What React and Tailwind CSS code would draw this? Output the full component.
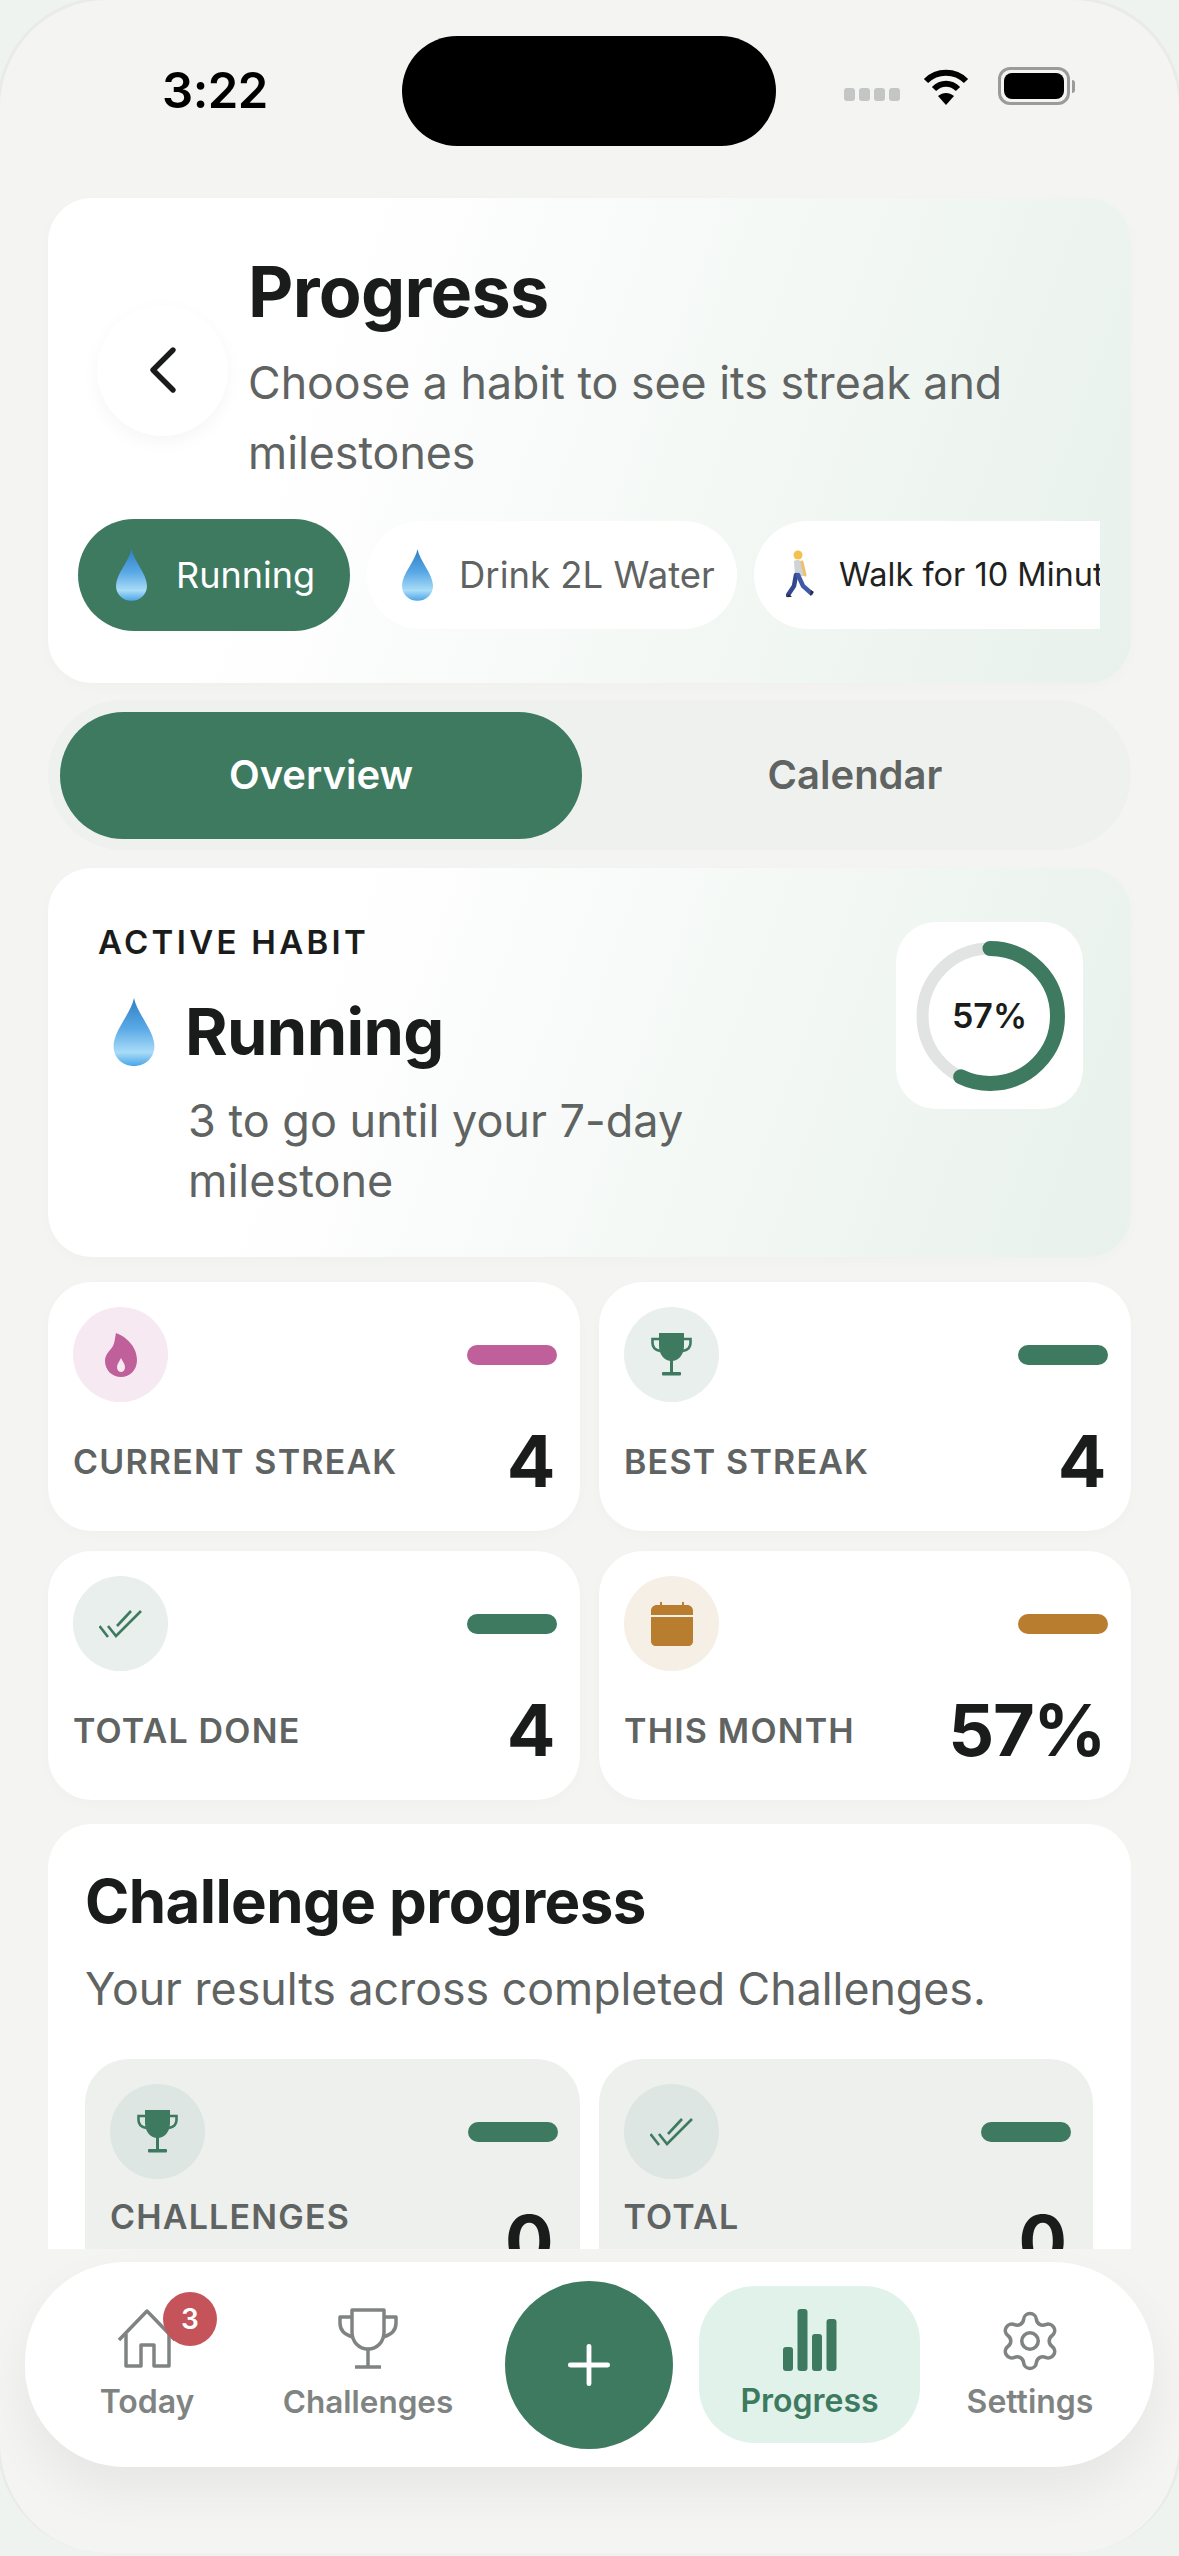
import { useId } from "react";
import { ChevronLeft, Plus, Settings } from "lucide-react";

function Drop({ className }) {
	const id = useId();
	return (
		<svg viewBox="0 0 30 50" className={`shrink-0 ${className}`}>
			<defs>
				<linearGradient id={id} x1="0" y1="0" x2="0" y2="1">
					<stop offset="0" stopColor="#2f7fc4" />
					<stop offset="0.45" stopColor="#5aa9e6" />
					<stop offset="0.8" stopColor="#a9dcf7" />
					<stop offset="1" stopColor="#4aa5e8" />
				</linearGradient>
			</defs>
			<path d="M15 0C17 11 30 24 30 35.5C30 44 23.5 50 15 50C6.5 50 0 44 0 35.5C0 24 13 11 15 0Z" fill={`url(#${id})`} />
		</svg>
	);
}

function Walker({ className }) {
	return (
		<svg viewBox="0 0 30 50" className={`shrink-0 ${className}`}>
			<circle cx="12" cy="5" r="4.5" fill="#f2c14e" />
			<path d="M8 11C11 9 16 10 17 14L18 26H9Z" fill="#cfd3d6" />
			<path d="M16 12L19 25" stroke="#f0bf6a" strokeWidth="3" strokeLinecap="round" />
			<path d="M10 25L8 36L2 45" stroke="#33488f" strokeWidth="4.5" fill="none" strokeLinecap="round" />
			<path d="M12 25L17 36L25 43" stroke="#3f58a8" strokeWidth="4.5" fill="none" strokeLinecap="round" />
			<path d="M0 47H6L3 44Z M24 46L28 42L25 40Z" fill="#2b2f3a" />
		</svg>
	);
}

function FlameIcon() {
	return (
		<svg viewBox="0 0 32 44" className="w-[32px] h-[44px]">
			<path
				fillRule="evenodd"
				d="M11 0C20 3 32 13 32 27C32 37 25 44 16 44C7 44 0 37 0 28C0 21 5 18 8 13C10 9 10 4 11 0ZM16 25C14 29 12 31 12 34.500C12 37 14 39 16 39C18 39 20 37 20 34.500C20 31 18 29 16 25Z"
				fill="#c0609b"
			/>
		</svg>
	);
}

function TrophyFilled() {
	return (
		<svg viewBox="0 0 42 43" className="w-[42px] h-[43px]">
			<path d="M8 0H33V13C33 22 27 28 20.500 28C14 28 8 22 8 13Z" fill="#3d7a60" />
			<path d="M8 6H1.500V10C1.500 14 4 17 9 18M33 6H39.500V10C39.500 14 37 17 32 18" stroke="#3d7a60" strokeWidth="2.600" fill="none" />
			<rect x="19" y="27" width="3" height="13" fill="#3d7a60" />
			<rect x="11" y="39" width="19" height="3.500" rx="1" fill="#3d7a60" />
		</svg>
	);
}

function DoubleCheck() {
	return (
		<svg viewBox="0 0 43 30" className="w-[43px] h-[30px]" fill="none" stroke="#3d7a60" strokeWidth="2.600">
			<path d="M0.500 17L9 28" />
			<path d="M9 17L17 27L42 2" />
			<path d="M18 17L32 2" />
		</svg>
	);
}

function CalendarFilled() {
	return (
		<svg viewBox="0 0 42 44" className="w-[42px] h-[44px]">
			<path d="M9 0H11V3H31V0H33V3H36C39.500 3 42 5.500 42 9V13H0V9C0 5.500 2.500 3 6 3H9Z" fill="#b87d2e" />
			<path d="M0 15H42V39C42 42 40 44 37 44H5C2 44 0 42 0 39Z" fill="#b87d2e" />
		</svg>
	);
}

function StatCard({ icon, circle, bar, label, value }) {
	return (
		<div className="h-[249px] rounded-[44px] bg-white pl-[25px] pr-[26px] pt-[25px] shadow-[0_4px_14px_rgba(0,0,0,0.02)]">
			<div className="flex items-center justify-between">
				<div className={`w-[95px] h-[95px] rounded-full flex items-center justify-center ${circle}`}>{icon}</div>
				<div className={`-mr-[3px] w-[90px] h-[20px] rounded-full ${bar}`} />
			</div>
			<div className="mt-[21px] flex items-center justify-between">
				<span className="text-[34px] font-semibold tracking-[0.035em] text-[#5f6362]">{label}</span>
				<span className="text-[72px] leading-[76px] font-bold tracking-[-0.02em] text-[#1a1c1b]">{value}</span>
			</div>
		</div>
	);
}

function MiniCard({ icon, label }) {
	return (
		<div className="h-[250px] rounded-t-[44px] bg-[#eef0ee] pl-[25px] pr-[22px] pt-[25px]">
			<div className="flex items-center justify-between">
				<div className="w-[95px] h-[95px] rounded-full bg-[#dde6e2] flex items-center justify-center">{icon}</div>
				<div className="w-[90px] h-[20px] rounded-full bg-[#3d7a60]" />
			</div>
			<div className="mt-[16px] flex items-start justify-between">
				<span className="text-[34px] leading-[44px] font-semibold tracking-[0.035em] text-[#5f6362]">{label}</span>
				<span className="mt-[8px] mr-[4px] text-[72px] leading-[76px] font-bold text-[#1a1c1b]">0</span>
			</div>
		</div>
	);
}

function HabitChip({ icon, label, className }) {
	return (
		<div className={`shrink-0 rounded-full flex items-center ${className}`}>
			{icon}
			<span className="whitespace-nowrap">{label}</span>
		</div>
	);
}

export default function App() {
	return (
		<div className="w-[1179px] h-[2556px] overflow-hidden bg-[#eff3f0] font-['Inter','Liberation_Sans',sans-serif]">
			<div className="h-[2556px] rounded-[110px] border-[3px] border-b-0 border-[#e9ebe8] bg-[#f4f5f3] -m-[3px] overflow-hidden">
				<div className="h-[2249px] overflow-hidden">
					{/* Status bar */}
					<div className="h-[198px] pt-[36px] pl-[162px] pr-[104px] flex items-start justify-between">
						<span className="mt-[27px] w-[106px] text-[49px] leading-[56px] font-semibold text-black tracking-[-0.01em]">3:22</span>
						<div className="ml-[134px] w-[375px] h-[110px] rounded-full bg-black" />
						<div className="ml-[68px] mt-[31px] flex items-center">
							<div className="mt-[17px] flex gap-[4px]">
								<div className="w-[11px] h-[13px] rounded-[3px] bg-[#c3c6c5]" />
								<div className="w-[11px] h-[13px] rounded-[3px] bg-[#c3c6c5]" />
								<div className="w-[11px] h-[13px] rounded-[3px] bg-[#c3c6c5]" />
								<div className="w-[11px] h-[13px] rounded-[3px] bg-[#c3c6c5]" />
							</div>
							<svg viewBox="0 0 46 38" className="ml-[23px] w-[46px] h-[38px]" fill="none" stroke="#000" strokeWidth="6">
								<path d="M3 14C14 3 32 3 43 14" />
								<path d="M11 22C18 15 28 15 35 22" />
								<path d="M23 38L15 29C20 25 26 25 31 29Z" fill="#000" stroke="none" />
							</svg>
							<div className="ml-[29px] w-[72px] h-[38px] rounded-[12px] border-[3px] border-[#9a9c9b] p-[3px]">
								<div className="w-full h-full rounded-[8px] bg-black" />
							</div>
							<div className="ml-[2px] w-[3px] h-[13px] rounded-r-full bg-[#9a9c9b]" />
						</div>
					</div>

					<div className="px-[48px]">
						{/* Header card */}
						<div className="h-[485px] rounded-[44px] bg-linear-[110deg] from-white from-25% to-[#e8f1eb] pt-[54px] pl-[30px] shadow-[0_4px_14px_rgba(0,0,0,0.02)]">
							<div className="flex items-center pl-[19px]">
								<button className="shrink-0 w-[131px] h-[131px] rounded-full bg-white flex items-center justify-center shadow-[0_6px_18px_rgba(0,0,0,0.04)]">
									<ChevronLeft className="w-[80px] h-[80px] text-[#1a1c1b]" strokeWidth={1.600} />
								</button>
								<div className="ml-[20px]">
									<h1 className="text-[70px] leading-[80px] font-bold text-[#1a1c1b] tracking-[-0.01em]">Progress</h1>
									<p className="mt-[16px] w-[800px] text-[44.700px] leading-[70px] text-[#5f6362]">Choose a habit to see its streak and milestones</p>
								</div>
							</div>
							<div className="mt-[31px] w-[1022px] h-[112px] overflow-hidden flex items-center">
								<HabitChip
									className="h-[112px] w-[272px] pl-[38px] bg-[#3d7a60] text-white text-[36px]"
									icon={<Drop className="w-[31px] h-[52px] mr-[29px]" />}
									label="Running"
								/>
								<HabitChip
									className="h-[108px] ml-[17px] w-[370px] pl-[35px] bg-white text-[#5f6362] text-[36.500px]"
									icon={<Drop className="w-[31px] h-[52px] mr-[26px]" />}
									label="Drink 2L Water"
								/>
								<HabitChip
									className="h-[108px] ml-[17px] w-[400px] pl-[32px] bg-white text-[#1f2221] text-[32.500px]"
									icon={<Walker className="w-[30px] h-[50px] mr-[23px]" />}
									label="Walk for 10 Minutes"
								/>
							</div>
						</div>

						{/* Tabs */}
						<div className="mt-[17px] h-[150px] rounded-full bg-[#eff1ee] p-[11px] pl-[12px] flex items-center">
							<div className="w-[522px] h-[127px] rounded-full bg-[#3d7a60] flex items-center justify-center text-[40px] font-semibold text-white">Overview</div>
							<div className="flex-1 pl-[8px] text-center text-[40px] font-semibold text-[#5f6362]">Calendar</div>
						</div>

						{/* Active habit */}
						<div className="mt-[18px] h-[389px] rounded-[44px] bg-linear-[110deg] from-white from-25% to-[#e8f1eb] pt-[54px] pl-[50px] pr-[48px] flex justify-between items-start shadow-[0_4px_14px_rgba(0,0,0,0.02)]">
							<div>
								<div className="text-[33px] leading-[40px] font-semibold tracking-[0.1em] text-[#1a1c1b]">ACTIVE HABIT</div>
								<div className="mt-[32px] ml-[15px] flex items-center">
									<Drop className="w-[42px] h-[68px] mr-[30px]" />
									<span className="text-[65px] leading-[76px] font-bold text-[#1a1c1b] tracking-[-0.01em]">Running</span>
								</div>
								<p className="mt-[21px] ml-[90px] w-[560px] text-[45px] leading-[60px] text-[#5f6362]">3 to go until your 7-day milestone</p>
							</div>
							<div className="relative w-[187px] h-[187px] rounded-[40px] bg-white flex items-center justify-center">
								<svg viewBox="0 0 150 150" className="w-[150px] h-[150px] -rotate-90">
									<circle cx="75" cy="75" r="67.500" fill="none" stroke="#e1e4e2" strokeWidth="12" />
									<circle cx="75" cy="75" r="67.500" fill="none" stroke="#3d7a60" strokeWidth="15" strokeLinecap="round" strokeDasharray="242 424" />
								</svg>
								<span className="absolute inset-0 flex items-center justify-center text-[34px] font-semibold text-[#1a1c1b]">57%</span>
							</div>
						</div>

						{/* Stats */}
						<div className="mt-[25px] grid grid-cols-2 gap-x-[19px] gap-y-[20px]">
							<StatCard icon={<FlameIcon />} circle="bg-[#f6e9f2]" bar="bg-[#c0609b]" label="CURRENT STREAK" value="4" />
							<StatCard icon={<TrophyFilled />} circle="bg-[#e8efec]" bar="bg-[#3d7a60]" label="BEST STREAK" value="4" />
							<StatCard icon={<DoubleCheck />} circle="bg-[#e8efec]" bar="bg-[#3d7a60]" label="TOTAL DONE" value="4" />
							<StatCard icon={<CalendarFilled />} circle="bg-[#f5efe6]" bar="bg-[#b87d2e]" label="THIS MONTH" value="57%" />
						</div>

						{/* Challenge progress */}
						<div className="mt-[24px] h-[600px] rounded-t-[44px] bg-white pt-[42px] pl-[37px] pr-[38px]">
							<h2 className="text-[60px] leading-[70px] font-bold text-[#1a1c1b] tracking-[-0.01em]">Challenge progress</h2>
							<p className="mt-[23px] text-[44.700px] leading-[60px] text-[#5f6362]">Your results across completed Challenges.</p>
							<div className="mt-[40px] grid grid-cols-2 gap-[19px]">
								<MiniCard icon={<TrophyFilled />} label="CHALLENGES" />
								<MiniCard icon={<DoubleCheck />} label="TOTAL" />
							</div>
						</div>
					</div>
				</div>

				{/* Bottom nav */}
				<div className="mt-[13px] mx-[25px] h-[205px] rounded-[100px] bg-white pl-[60px] flex items-center shadow-[0_24px_50px_rgba(0,0,0,0.06)]">
					<div className="w-[124px] flex flex-col items-center text-[#7f8482]">
						<div className="relative w-[60px] h-[62px]">
							<svg viewBox="0 0 60 60" className="w-[60px] h-[60px]" fill="none" stroke="#7f8482" strokeWidth="3.500" strokeLinejoin="round">
								<path d="M2 32L30 3L58 32" />
								<path d="M9 26V58H24V37H37V58H52V26" />
							</svg>
							<span className="absolute -top-[16px] left-[46px] w-[54px] h-[54px] rounded-full bg-[#c5535a] flex items-center justify-center text-[28px] font-semibold text-white">3</span>
						</div>
						<span className="mt-[12px] text-[32px] leading-[40px] font-semibold">Today</span>
					</div>
					<div className="ml-[30px] w-[258px] flex flex-col items-center text-[#7f8482]">
						<svg viewBox="0 0 60 62" className="w-[60px] h-[62px]" fill="none" stroke="#7f8482" strokeWidth="3.500" strokeLinejoin="round">
							<path d="M14 2H46V24C46 34 39 41 30 41C21 41 14 34 14 24Z" />
							<path d="M14 9H2V15C2 22 7 27 15 29M46 9H58V15C58 22 53 27 45 29" />
							<path d="M30 41V59M17 59H43" />
						</svg>
						<span className="mt-[12px] text-[31.500px] leading-[40px] font-semibold">Challenges</span>
					</div>
					<button className="ml-[8px] w-[168px] h-[168px] shrink-0 rounded-full bg-[#3d7a60] flex items-center justify-center">
						<Plus className="w-[64px] h-[64px] text-white" strokeWidth={1.800} />
					</button>
					<div className="ml-[26px] w-[221px] h-[157px] rounded-[56px] bg-[#e0f2ea] flex flex-col items-center justify-center text-[#3d7a60]">
						<svg viewBox="0 0 54 62" className="w-[54px] h-[62px]" fill="#3d7a60">
							<rect x="0" y="38" width="10" height="24" rx="3" />
							<rect x="14.500" y="0" width="10" height="62" rx="3" />
							<rect x="29" y="25" width="10" height="37" rx="3" />
							<rect x="43.500" y="10" width="10" height="52" rx="3" />
						</svg>
						<span className="mt-[10px] text-[32px] leading-[40px] font-semibold">Progress</span>
					</div>
					<div className="w-[220px] flex flex-col items-center text-[#7f8482]">
						<Settings className="w-[66px] h-[66px]" strokeWidth={1.300} />
						<span className="mt-[8px] text-[32px] leading-[40px] font-semibold">Settings</span>
					</div>
				</div>
			</div>
		</div>
	);
}
